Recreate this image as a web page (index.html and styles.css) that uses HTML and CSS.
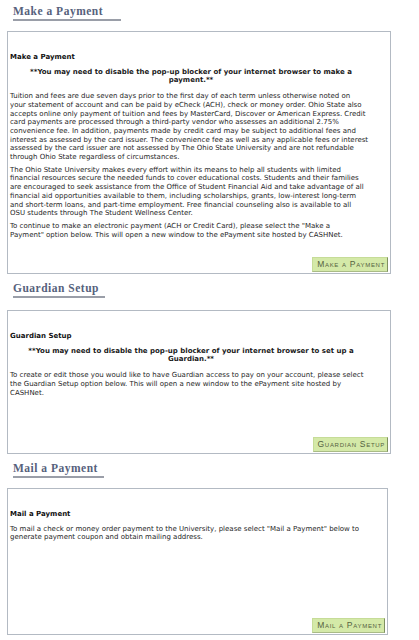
FILE: index.html
```html
<!DOCTYPE html>
<html lang="en">
<head>
<meta charset="utf-8">
<title>Payments</title>
<link rel="stylesheet" href="styles.css">
</head>
<body>
<div class="page">
  <section class="pay-section">
    <h2 class="section-title section-title--wide">Make a Payment</h2>
    <div class="panel panel--payment">
      <div class="panel-body">
        <p class="panel-label">Make a Payment</p>
        <p class="notice">**You may need to disable the pop-up blocker of your internet browser to make a payment.**</p>
        <p>Tuition and fees are due seven days prior to the first day of each term unless otherwise noted on your&nbsp;statement of account and can be paid by eCheck (ACH), check or money order. Ohio State also accepts online only payment of tuition and fees by MasterCard, Discover or American Express. Credit card payments are processed through a third-party vendor who assesses an additional 2.75% convenience fee. In addition, payments made by credit card may be subject to additional fees and interest as assessed by the card issuer. The convenience fee as well as any applicable fees or interest assessed by the card issuer are not assessed by The Ohio State University and are not refundable through Ohio State regardless of circumstances.</p>
        <p>The Ohio State University makes every effort within its means to help all students with limited financial resources secure the needed funds to cover educational costs. Students and their families are encouraged to seek assistance from the Office of Student Financial Aid and take advantage of all financial aid opportunities available to them, including scholarships, grants, low-interest long-term and&nbsp;short-term loans, and part-time employment. Free financial counseling also is available to all OSU&nbsp;students through The Student Wellness Center.</p>
        <p>To continue to make an electronic payment (ACH or Credit Card), please select the "Make a Payment"&nbsp;option below. This will open a new window to the ePayment site hosted by CASHNet.</p>
      </div>
      <div class="panel-actions">
        <button class="action-btn" type="button">Make a Payment</button>
      </div>
    </div>
  </section>

  <section class="pay-section">
    <h2 class="section-title">Guardian Setup</h2>
    <div class="panel panel--guardian">
      <div class="panel-body">
        <p class="panel-label">Guardian Setup</p>
        <p class="notice">**You may need to disable the pop-up blocker of your internet browser to set up a Guardian.**</p>
        <p>To create or edit those you would like to have Guardian access to pay on your account, please select the&nbsp;Guardian Setup option below. This will open a new window to the ePayment site hosted by CASHNet.</p>
      </div>
      <div class="panel-actions">
        <button class="action-btn" type="button">Guardian Setup</button>
      </div>
    </div>
  </section>

  <section class="pay-section">
    <h2 class="section-title">Mail a Payment</h2>
    <div class="panel panel--mail">
      <div class="panel-body">
        <p class="panel-label">Mail a Payment</p>
        <p>To mail a check or money order payment to the University, please select "Mail a Payment" below to generate payment coupon and obtain mailing address.</p>
      </div>
      <div class="panel-actions">
        <button class="action-btn" type="button">Mail a Payment</button>
      </div>
    </div>
  </section>
</div>
</body>
</html>
```

FILE: styles.css
```css
* {
  box-sizing: border-box;
}

html, body {
  margin: 0;
  padding: 0;
  background: #ffffff;
}

.page {
  width: 419px;
  display: flex;
  flex-direction: column;
  gap: 3px;
}

.pay-section {
  display: flex;
  flex-direction: column;
  align-items: flex-start;
}

/* section heading with the grey rule underneath */
.section-title {
  margin: 0 0 0 13px;
  padding: 4px 6px 0 0;
  font-family: "Liberation Serif", "Times New Roman", serif;
  font-weight: bold;
  font-size: 11.5px;
  line-height: 15px;
  letter-spacing: 0.5px;
  color: #56617c;
  border-bottom: 2px solid #9a9ea8;
}

.section-title--wide {
  padding-right: 18px;
}

.panel {
  margin: 10px 0 0 7px;
  width: 384px;
  border: 1px solid #b3bac3;
  display: flex;
  flex-direction: column;
  font-family: "DejaVu Sans", Verdana, sans-serif;
  font-size: 7px;
  line-height: 8.7px;
  color: #262626;
}

.panel--payment {
  height: 243px;
}

.panel--guardian {
  margin-top: 12px;
  height: 144px;
}

.panel--mail {
  margin-top: 10px;
  width: 381px;
  height: 147px;
}

.panel-body {
  padding: 21px 18px 0 2px;
}

.panel-body p {
  margin: 0 0 4px;
}

.panel-body .panel-label {
  font-weight: bold;
  color: #111;
  margin-bottom: 6px;
}

.panel-body .notice {
  font-weight: bold;
  color: #1a1a1a;
  text-align: center;
  margin-bottom: 7px;
  padding: 0 8px;
}

.panel-actions {
  margin-top: auto;
  display: flex;
  justify-content: flex-end;
  padding: 0 2px 1px 0;
}

.action-btn {
  height: 15px;
  padding: 0 2px 0 4px;
  background: #d4e9a8;
  border: 1px solid #c6dc98;
  border-right-color: #7e9060;
  border-bottom-color: #a9bb86;
  font-family: "Liberation Sans", Arial, sans-serif;
  font-size: 8.5px;
  font-variant: small-caps;
  letter-spacing: 0.7px;
  color: #55623f;
  line-height: 13px;
}
```
